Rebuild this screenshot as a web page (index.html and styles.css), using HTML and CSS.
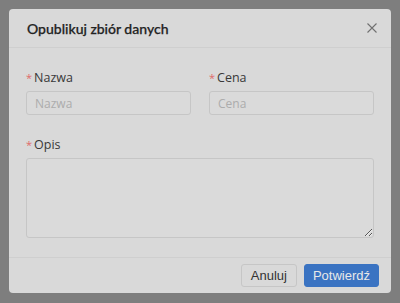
FILE: index.html
```html
<!DOCTYPE html>
<html lang="pl">
<head>
<meta charset="utf-8">
<link rel="stylesheet" href="styles.css">
</head>
<body>
<div class="overlay">
  <div class="dialog">
    <div class="header">
      <span class="title">Opublikuj zbiór danych</span>
      <span class="close"><svg width="12" height="12" viewBox="0 0 12 12"><path d="M1.5 1.5L10.5 10.5M10.5 1.5L1.5 10.5" stroke="#707070" stroke-width="1.1" fill="none"/></svg></span>
    </div>
    <div class="body">
      <div class="row">
        <div class="field">
          <label class="label"><span class="req">*</span>Nazwa</label>
          <input class="input" placeholder="Nazwa">
        </div>
        <div class="field">
          <label class="label"><span class="req">*</span>Cena</label>
          <input class="input" placeholder="Cena">
        </div>
      </div>
      <div class="field">
        <label class="label"><span class="req">*</span>Opis</label>
        <textarea class="textarea"></textarea>
      </div>
    </div>
    <div class="footer">
      <button class="btn">Anuluj</button>
      <button class="btn primary">Potwierdź</button>
    </div>
  </div>
</div>
</body>
</html>
```
FILE: styles.css
```css
html, body { margin: 0; padding: 0; }
body { background: #7e7e7e; font-family: "Open Sans", sans-serif; width: 400px; height: 303px; overflow: hidden; }
.overlay { padding: 9px 9px 0 9px; }
.dialog { width: 382px; height: 284px; background: #d9d9d9; border-radius: 4px; display: flex; flex-direction: column; box-sizing: border-box; }
.header { height: 39px; border-bottom: 1px solid #cfcfcf; display: flex; align-items: center; justify-content: space-between; padding: 0 13px 0 18px; box-sizing: border-box; }
.title { font-family: "Lato", sans-serif; font-size: 14px; font-weight: 500; color: #222; -webkit-text-stroke: 0.25px #222; }
.close { display: flex; }
.body { flex: 1; padding: 21px 17px 0 17px; display: flex; flex-direction: column; gap: 21px; }
.row { display: flex; gap: 18px; }
.row .field { width: 165px; }
.field { display: flex; flex-direction: column; }
.label { font-size: 12.5px; color: #383838; height: 18px; line-height: 18px; margin-bottom: 4px; }
.req { color: #e06a6a; margin-right: 2px; font-size: 11px; }
.input { width: 165px; height: 24px; box-sizing: border-box; border: 1px solid #c6c6c6; border-radius: 3px; background: #dadada; padding: 0 8px; font-family: "Open Sans", sans-serif; font-size: 12px; outline: none; }
.input::placeholder { color: #acacac; }
.textarea { width: 348px; height: 80px; box-sizing: border-box; border: 1px solid #c6c6c6; border-radius: 3px; background: #dadada; resize: vertical; outline: none; }
.footer { height: 36px; border-top: 1px solid #cfcfcf; display: flex; justify-content: flex-end; align-items: center; gap: 7px; padding: 0 12px 0 0; box-sizing: border-box; }
.btn { height: 23px; padding: 0 9px; border: 1px solid #c6c6c6; border-radius: 3px; background: #d9d9d9; color: #333; font-family: "Liberation Sans", sans-serif; font-size: 13px; }
.primary { padding: 0 8px; background: #3a73c2; border-color: #3a73c2; color: #e8e8e8; }
```
